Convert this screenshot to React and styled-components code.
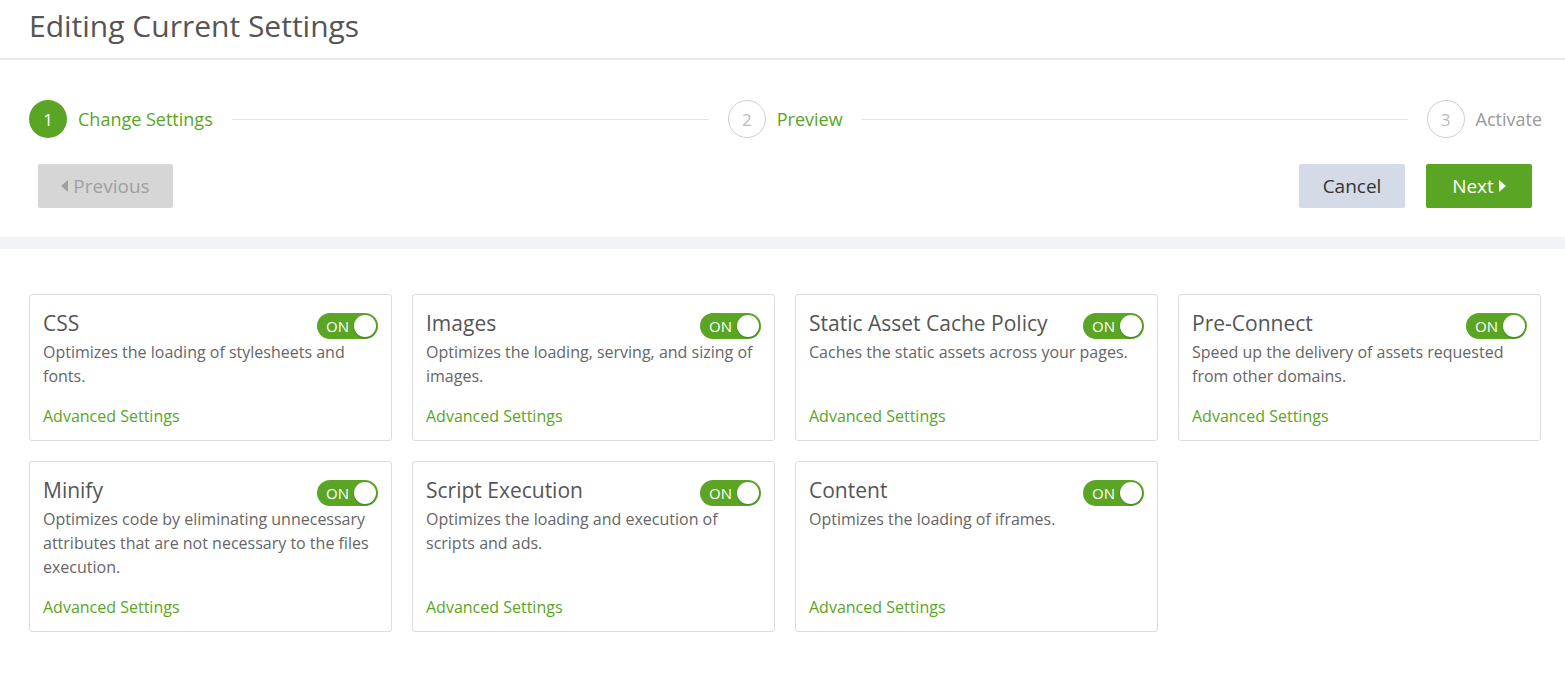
import styled, { createGlobalStyle } from "styled-components";

const GREEN = "#5aa524";

const GlobalStyle = createGlobalStyle`
  * { box-sizing: border-box; }
  body {
    margin: 0;
    background: #fff;
    font-family: "Open Sans", "Noto Sans", sans-serif;
    color: #555;
  }
`;

const Page = styled.div`
  width: 1565px;
`;

const Header = styled.div`
  height: 60px;
  display: flex;
  align-items: center;
  padding: 0 0 8px 29px;
  border-bottom: 2px solid #e8e8e8;
`;

const Title = styled.h1`
  margin: 0;
  font-size: 30px;
  font-weight: 400;
  color: #555;
`;

const Stepper = styled.div`
  display: grid;
  grid-template-columns: 1fr 1fr auto;
  align-items: center;
  padding: 40px 23px 0 29px;
`;

const Step = styled.div`
  display: flex;
  align-items: center;
  gap: 11px;
`;

const StepCircle = styled.div`
  width: 38px;
  height: 38px;
  flex: none;
  border-radius: 50%;
  display: flex;
  align-items: center;
  justify-content: center;
  font-size: 17px;
  background: ${(p) => (p.$active ? GREEN : "#fff")};
  color: ${(p) => (p.$active ? "#fff" : "#bbb")};
  border: ${(p) => (p.$active ? "none" : "1.5px solid #cfcfcf")};
`;

const StepLabel = styled.span`
  font-size: 18px;
  white-space: nowrap;
  color: ${(p) => (p.$muted ? "#999" : GREEN)};
`;

const StepLine = styled.div`
  flex: 1;
  height: 1px;
  background: #e4e4e4;
  margin: 0 19px 0 8px;
`;

const Actions = styled.div`
  display: flex;
  align-items: center;
  padding: 26px 33px 0 38px;
  gap: 21px;
`;

const Spacer = styled.div`
  flex: 1;
`;

const Button = styled.button`
  height: 44px;
  min-width: ${(p) => p.$width || 106}px;
  border: none;
  border-radius: 2px;
  font-family: inherit;
  font-size: 19px;
  display: flex;
  align-items: center;
  justify-content: center;
  gap: 5px;
  cursor: pointer;
  background: ${(p) =>
    p.$variant === "primary" ? GREEN : p.$variant === "secondary" ? "#d4dbe6" : "#d6d6d6"};
  color: ${(p) =>
    p.$variant === "primary" ? "#fff" : p.$variant === "secondary" ? "#333" : "#a0a0a0"};
`;

const Caret = styled.span`
  width: 0;
  height: 0;
  border-top: 6px solid transparent;
  border-bottom: 6px solid transparent;
  ${(p) =>
    p.$dir === "left"
      ? "border-right: 7px solid currentColor;"
      : "border-left: 7px solid currentColor;"}
`;

const Band = styled.div`
  height: 12px;
  background: #f2f3f6;
  margin-top: 29px;
`;

const Grid = styled.div`
  display: grid;
  grid-template-columns: repeat(4, 363px);
  gap: 20px;
  padding: 45px 24px 40px 29px;
`;

const Card = styled.div`
  border: 1px solid #dcdcdc;
  border-radius: 3px;
  padding: 14px 13px 12px;
  display: flex;
  flex-direction: column;
`;

const CardHead = styled.div`
  display: flex;
  justify-content: space-between;
  align-items: flex-start;
`;

const CardTitle = styled.div`
  font-size: 21px;
  line-height: 28px;
  color: #555;
`;

const Toggle = styled.div`
  width: 61px;
  height: 26px;
  flex: none;
  border-radius: 13px;
  background: ${GREEN};
  margin-top: 4px;
  display: flex;
  align-items: center;
  justify-content: space-between;
  padding: 0 2px 0 9px;
  color: #fff;
  font-size: 15px;
  font-weight: 500;
`;

const Knob = styled.span`
  width: 22px;
  height: 22px;
  border-radius: 50%;
  background: #fff;
  box-shadow: 0 1px 2px rgba(0, 0, 0, 0.25);
`;

const Desc = styled.p`
  margin: 1px 0 16px;
  font-size: 16px;
  line-height: 24px;
  color: #666;
`;

const Link = styled.a`
  margin-top: auto;
  font-size: 16px;
  line-height: 24px;
  color: ${GREEN};
  text-decoration: none;
`;

const settings = [
  { title: "CSS", desc: "Optimizes the loading of stylesheets and fonts." },
  { title: "Images", desc: "Optimizes the loading, serving, and sizing of images." },
  { title: "Static Asset Cache Policy", desc: "Caches the static assets across your pages." },
  { title: "Pre-Connect", desc: "Speed up the delivery of assets requested from other domains." },
  {
    title: "Minify",
    desc: "Optimizes code by eliminating unnecessary attributes that are not necessary to the files execution.",
  },
  { title: "Script Execution", desc: "Optimizes the loading and execution of scripts and ads." },
  { title: "Content", desc: "Optimizes the loading of iframes." },
];

const App = () => {
  return (
    <Page>
      <GlobalStyle />
      <Header>
        <Title>Editing Current Settings</Title>
      </Header>
      <Stepper>
        <Step>
          <StepCircle $active>1</StepCircle>
          <StepLabel>Change Settings</StepLabel>
          <StepLine />
        </Step>
        <Step>
          <StepCircle>2</StepCircle>
          <StepLabel>Preview</StepLabel>
          <StepLine />
        </Step>
        <Step>
          <StepCircle>3</StepCircle>
          <StepLabel $muted>Activate</StepLabel>
        </Step>
      </Stepper>
      <Actions>
        <Button $width={135}>
          <Caret $dir="left" />
          Previous
        </Button>
        <Spacer />
        <Button $variant="secondary">Cancel</Button>
        <Button $variant="primary">
          Next
          <Caret $dir="right" />
        </Button>
      </Actions>
      <Band />
      <Grid>
        {settings.map((s) => (
          <Card key={s.title}>
            <CardHead>
              <CardTitle>{s.title}</CardTitle>
              <Toggle>
                ON
                <Knob />
              </Toggle>
            </CardHead>
            <Desc>{s.desc}</Desc>
            <Link href="#">Advanced Settings</Link>
          </Card>
        ))}
      </Grid>
    </Page>
  );
};

export default App;
